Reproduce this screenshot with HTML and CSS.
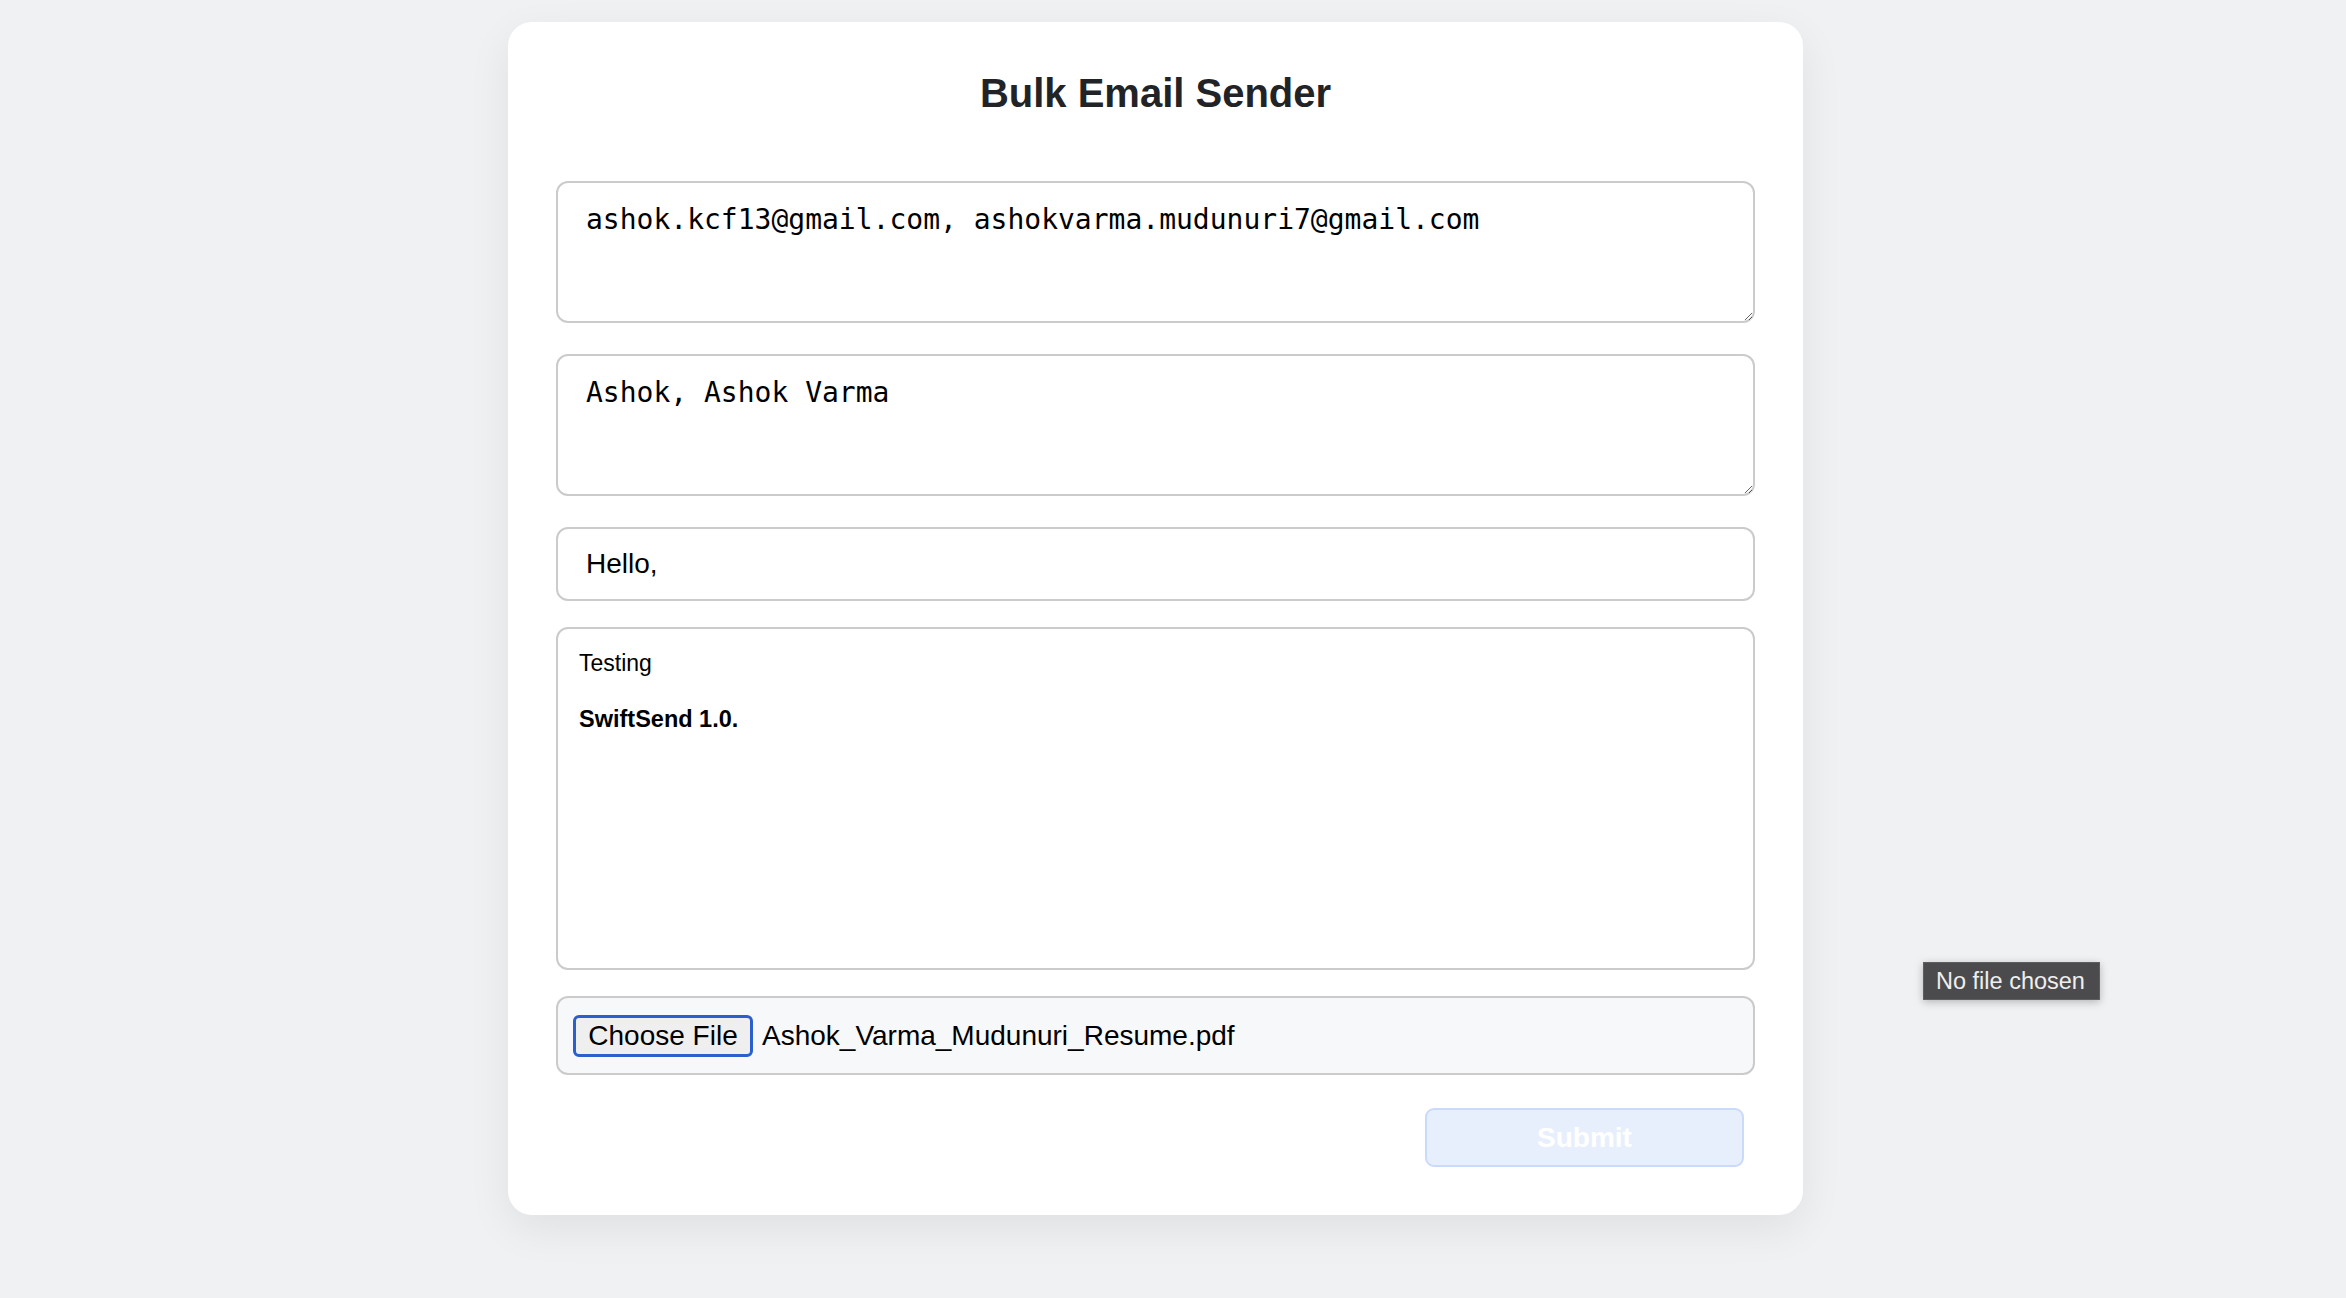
FILE: index.html
```html
<!DOCTYPE html>
<html lang="en">
<head>
<meta charset="utf-8">
<title>Bulk Email Sender</title>
<link rel="stylesheet" href="styles.css">
</head>
<body>
<div class="card">
  <h1 class="title">Bulk Email Sender</h1>
  <form class="form">
    <textarea class="field area">ashok.kcf13@gmail.com, ashokvarma.mudunuri7@gmail.com</textarea>
    <textarea class="field area area-2">Ashok, Ashok Varma</textarea>
    <input class="field line" type="text" value="Hello,">
    <div class="editor">
      <p>Testing</p>
      <p><br></p>
      <p><strong>SwiftSend 1.0.</strong></p>
    </div>
    <div class="file">
      <span class="file-btn">Choose File</span>
      <span class="file-name">Ashok_Varma_Mudunuri_Resume.pdf</span>
    </div>
    <div class="actions">
      <button type="button" class="submit">Submit</button>
    </div>
  </form>
</div>
<div class="tooltip">No file chosen</div>
</body>
</html>
```
FILE: styles.css
```css
html, body {
  margin: 0;
  padding: 0;
  background: #f0f1f3;
  height: 100%;
}
body {
  font-family: "Liberation Sans", Arial, sans-serif;
  color: #000;
}
.card {
  box-sizing: border-box;
  width: 1295px;
  margin: 22px 0 0 508px;
  padding: 48px 48px 48px 48px;
  background: #fff;
  border-radius: 24px;
  box-shadow: 0 14px 44px rgba(0, 0, 0, 0.07);
}
.title {
  margin: 0 0 65px 0;
  font-size: 40px;
  line-height: 46px;
  font-weight: bold;
  color: #222326;
  text-align: center;
}
.form {
  display: flex;
  flex-direction: column;
}
.field {
  box-sizing: border-box;
  width: 100%;
  border: 2px solid #cbcbcb;
  border-radius: 12px;
  background: #fff;
  color: #000;
  outline: none;
  margin: 0;
}
.area {
  height: 142px;
  padding: 20px 28px 14px 28px;
  font-family: "DejaVu Sans Mono", monospace;
  font-size: 28px;
  line-height: 33px;
  resize: vertical;
}
.area-2 {
  margin-top: 31px;
  height: 142px;
}
.line {
  margin-top: 31px;
  height: 74px;
  padding: 0 28px;
  font-family: "Liberation Sans", Arial, sans-serif;
  font-size: 28px;
}
.editor {
  box-sizing: border-box;
  margin-top: 26px;
  height: 343px;
  border: 2px solid #cbcbcb;
  border-radius: 12px;
  padding: 20px 21px;
  font-size: 23px;
  line-height: 28px;
}
.editor p {
  margin: 0;
}
.editor strong {
  font-size: 23.5px;
}
.file {
  box-sizing: border-box;
  margin-top: 26px;
  height: 79px;
  display: flex;
  align-items: center;
  padding: 0 15px;
  border: 2px solid #cbcbcb;
  border-radius: 12px;
  background: #f7f8fa;
  font-size: 28px;
}
.file-btn {
  box-sizing: border-box;
  height: 42px;
  width: 180px;
  display: flex;
  align-items: center;
  justify-content: center;
  background: #efefef;
  border: 3px solid #2a5fce;
  border-radius: 6px;
  color: #000;
}
.file-name {
  margin-left: 9px;
}
.actions {
  display: flex;
  justify-content: flex-end;
  margin-top: 33px;
  padding-right: 11px;
}
.submit {
  box-sizing: border-box;
  width: 319px;
  height: 59px;
  background: #e8effc;
  border: 2px solid #c9dafa;
  border-radius: 9px;
  color: #ffffff;
  font-family: "Liberation Sans", Arial, sans-serif;
  font-size: 28px;
  font-weight: bold;
  padding: 0;
}
.tooltip {
  position: absolute;
  left: 1923px;
  top: 962px;
  box-sizing: border-box;
  width: 177px;
  height: 38px;
  padding: 0 0 0 12px;
  display: flex;
  align-items: center;
  background: #4b4b4d;
  border: 1px solid #5e5e60;
  color: #efefef;
  font-size: 23.5px;
  box-shadow: 0 2px 8px rgba(0, 0, 0, 0.25);
}
```
